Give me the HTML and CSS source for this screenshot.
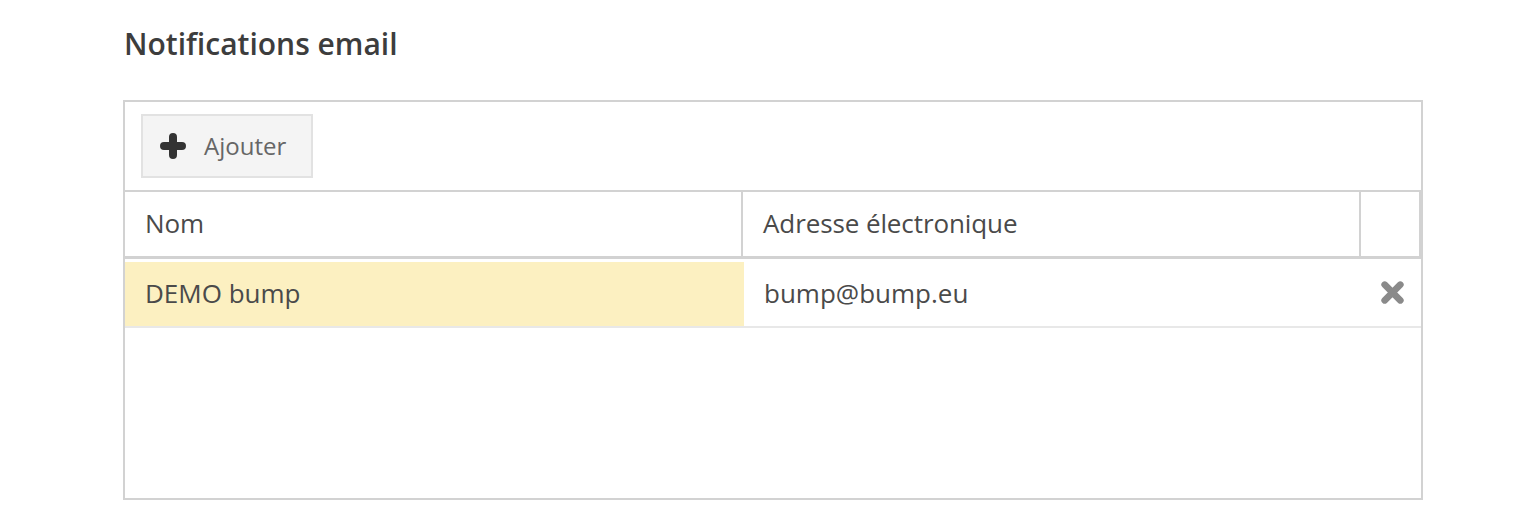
FILE: index.html
```html
<!DOCTYPE html>
<html lang="fr">
<head>
<meta charset="utf-8">
<title>Notifications email</title>
<link rel="stylesheet" href="styles.css">
</head>
<body>
<div class="page">
  <h2 class="title">Notifications email</h2>
  <div class="panel">
    <div class="toolbar">
      <button class="btn-add" type="button">
        <svg class="plus" width="26" height="26" viewBox="0 0 26 26" aria-hidden="true">
          <path d="M13 4 V22 M4 13 H22" stroke="#333" stroke-width="8" stroke-linecap="round" fill="none"/>
        </svg>
        <span>Ajouter</span>
      </button>
    </div>
    <div class="grid-head">
      <div class="hcell col-name">Nom</div>
      <div class="hcell col-mail">Adresse électronique</div>
      <div class="hcell col-act"></div>
    </div>
    <div class="grid-body">
      <div class="row">
        <div class="cell col-name dirty">DEMO bump</div>
        <div class="cell col-mail">bump@bump.eu</div>
        <div class="cell col-act-body">
          <svg class="del" width="27" height="27" viewBox="0 0 26 26" aria-hidden="true">
            <path d="M5.5 5.5 L20.5 20.5 M20.5 5.5 L5.5 20.5" stroke="#8a8a8a" stroke-width="6.5" stroke-linecap="round" fill="none"/>
          </svg>
        </div>
      </div>
    </div>
  </div>
</div>
</body>
</html>
```
FILE: styles.css
```css
* { box-sizing: border-box; }
html, body {
  margin: 0;
  padding: 0;
  background: #fff;
}
body {
  font-family: "Open Sans", "Liberation Sans", sans-serif;
  color: #4a4a4a;
}
.page {
  padding: 22px 0 0 123px;
  width: 1423px;
}
.title {
  margin: 0 0 0 1px;
  font-size: 30px;
  font-weight: 600;
  color: #3d3d3d;
  line-height: 44px;
  height: 78px;
}
.panel {
  border: 2px solid #d2d2d2;
  height: 400px;
  width: 1300px;
  display: flex;
  flex-direction: column;
}
.toolbar {
  padding: 12px 16px;
  border-bottom: 2px solid #d2d2d2;
  display: flex;
}
.btn-add {
  display: flex;
  align-items: center;
  gap: 18px;
  height: 64px;
  width: 172px;
  padding: 0 0 0 17px;
  background: #f4f4f4;
  border: 2px solid #e2e2e2;
  font-family: "Open Sans", "Liberation Sans", sans-serif;
  font-size: 24px;
  color: #666;
  cursor: pointer;
}
.btn-add span { margin-top: -2px; }
.grid-head {
  display: flex;
  height: 67px;
  border-bottom: 3px solid #d2d2d2;
}
.hcell {
  display: flex;
  align-items: center;
  font-size: 26px;
  color: #4a4a4a;
  border-right: 2px solid #d2d2d2;
  padding-left: 20px;
  padding-bottom: 2px;
  letter-spacing: -0.1px;
}
.hcell.col-name { width: 618px; }
.hcell.col-mail { width: 618px; }
.hcell.col-act { width: 60px; }
.grid-body {
  padding-top: 3px;
}
.row {
  display: flex;
  height: 66px;
  border-bottom: 2px solid #e8e8e8;
}
.cell {
  display: flex;
  align-items: center;
  font-size: 26px;
  color: #4a4a4a;
  padding-left: 20px;
  padding-bottom: 2px;
}
.cell.col-name { width: 620px; }
.cell.col-mail { width: 616px; }
.dirty { background: #fcf0c1; }
.col-act-body {
  flex: 1;
  display: flex;
  align-items: center;
  justify-content: flex-end;
  padding-right: 15px;
}
.del { display: block; margin-bottom: 2px; }
```
